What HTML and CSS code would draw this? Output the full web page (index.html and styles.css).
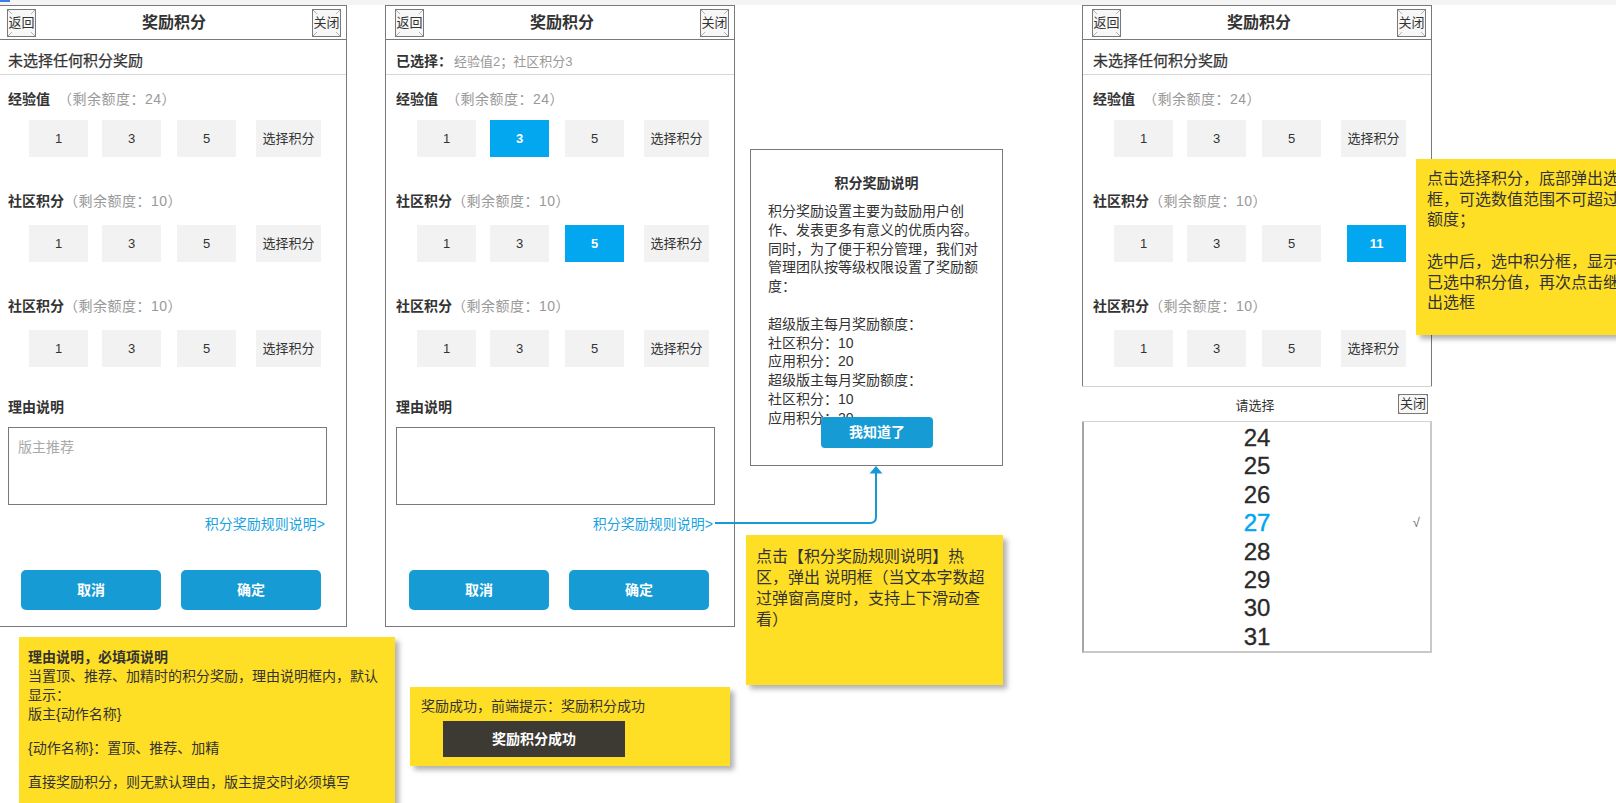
FILE: index.html
```html
<!DOCTYPE html>
<html lang="zh-CN">

<head>
    <meta charset="UTF-8">
    <title>奖励积分</title>
    <link rel="stylesheet" href="styles.css">
</head>

<body>
    <div class="canvas">
        <div class="topbar"><span class="topbar-mark"></span></div>

        <!-- 默认状态 -->
        <section class="phone phone-a">
            <header class="phone-header">
                <span class="ph-btn"><span>返回</span></span>
                <h1 class="phone-title">奖励积分</h1>
                <span class="ph-btn"><span>关闭</span></span>
            </header>
            <div class="status">未选择任何积分奖励</div>
            <div class="phone-body">
                <div class="group">
                    <div class="group-label">经验值<span class="quota quota-wide">（剩余额度：24）</span></div>
                    <div class="options">
                        <span class="opt">1</span><span class="opt">3</span><span class="opt">5</span><span class="opt opt-pick">选择积分</span>
                    </div>
                </div>
                <div class="group">
                    <div class="group-label">社区积分<span class="quota">（剩余额度：10）</span></div>
                    <div class="options">
                        <span class="opt">1</span><span class="opt">3</span><span class="opt">5</span><span class="opt opt-pick">选择积分</span>
                    </div>
                </div>
                <div class="group">
                    <div class="group-label">社区积分<span class="quota">（剩余额度：10）</span></div>
                    <div class="options">
                        <span class="opt">1</span><span class="opt">3</span><span class="opt">5</span><span class="opt opt-pick">选择积分</span>
                    </div>
                </div>
                <div class="reason-label">理由说明</div>
                <div class="reason-box">版主推荐</div>
                <a class="rule-link" href="#">积分奖励规则说明&gt;</a>
                <div class="actions">
                    <span class="btn">取消</span>
                    <span class="btn">确定</span>
                </div>
            </div>
        </section>

        <!-- 已选择状态 -->
        <section class="phone phone-b">
            <header class="phone-header">
                <span class="ph-btn"><span>返回</span></span>
                <h1 class="phone-title">奖励积分</h1>
                <span class="ph-btn"><span>关闭</span></span>
            </header>
            <div class="status status-picked">已选择：<span class="picked">经验值2；社区积分3</span></div>
            <div class="phone-body">
                <div class="group">
                    <div class="group-label">经验值<span class="quota quota-wide">（剩余额度：24）</span></div>
                    <div class="options">
                        <span class="opt">1</span><span class="opt opt-on">3</span><span class="opt">5</span><span class="opt opt-pick">选择积分</span>
                    </div>
                </div>
                <div class="group">
                    <div class="group-label">社区积分<span class="quota">（剩余额度：10）</span></div>
                    <div class="options">
                        <span class="opt">1</span><span class="opt">3</span><span class="opt opt-on">5</span><span class="opt opt-pick">选择积分</span>
                    </div>
                </div>
                <div class="group">
                    <div class="group-label">社区积分<span class="quota">（剩余额度：10）</span></div>
                    <div class="options">
                        <span class="opt">1</span><span class="opt">3</span><span class="opt">5</span><span class="opt opt-pick">选择积分</span>
                    </div>
                </div>
                <div class="reason-label">理由说明</div>
                <div class="reason-box"></div>
                <a class="rule-link" href="#">积分奖励规则说明&gt;</a>
                <div class="actions">
                    <span class="btn">取消</span>
                    <span class="btn">确定</span>
                </div>
            </div>
        </section>

        <!-- 说明弹窗 -->
        <div class="dialog">
            <h2 class="dialog-title">积分奖励说明</h2>
            <div class="dialog-text">
                <p>积分奖励设置主要为鼓励用户创作、发表更多有意义的优质内容。同时，为了便于积分管理，我们对管理团队按等级权限设置了奖励额度：</p>
                <p class="gap">超级版主每月奖励额度：<br>社区积分：10<br>应用积分：20<br>超级版主每月奖励额度：<br>社区积分：10<br>应用积分：20</p>
            </div>
            <span class="dialog-btn">我知道了</span>
        </div>

        <svg class="connector" width="200" height="80" viewBox="0 0 200 80">
            <path d="M15 68 H170 Q176 68 176 62 V17" fill="none" stroke="#1799d3" stroke-width="2"/>
            <polygon points="176,11 169.5,18.5 182.5,18.5" fill="#1799d3"/>
        </svg>

        <!-- 选择积分 + 底部选框 -->
        <div class="device-c">
            <section class="phone phone-c">
                <header class="phone-header">
                    <span class="ph-btn"><span>返回</span></span>
                    <h1 class="phone-title">奖励积分</h1>
                    <span class="ph-btn"><span>关闭</span></span>
                </header>
                <div class="status">未选择任何积分奖励</div>
                <div class="phone-body">
                    <div class="group">
                        <div class="group-label">经验值<span class="quota quota-wide">（剩余额度：24）</span></div>
                        <div class="options">
                            <span class="opt">1</span><span class="opt">3</span><span class="opt">5</span><span class="opt opt-pick">选择积分</span>
                        </div>
                    </div>
                    <div class="group">
                        <div class="group-label">社区积分<span class="quota">（剩余额度：10）</span></div>
                        <div class="options">
                            <span class="opt">1</span><span class="opt">3</span><span class="opt">5</span><span class="opt opt-on">11</span>
                        </div>
                    </div>
                    <div class="group">
                        <div class="group-label">社区积分<span class="quota">（剩余额度：10）</span></div>
                        <div class="options">
                            <span class="opt">1</span><span class="opt">3</span><span class="opt">5</span><span class="opt opt-pick">选择积分</span>
                        </div>
                    </div>
                </div>
            </section>
            <div class="picker-head">
                <span></span>
                <span class="picker-title">请选择</span>
                <span class="ph-btn ph-btn-sm"><span>关闭</span></span>
            </div>
            <div class="picker-list">
                <div class="picker-item"><span></span><span>24</span><span></span></div>
                <div class="picker-item"><span></span><span>25</span><span></span></div>
                <div class="picker-item"><span></span><span>26</span><span></span></div>
                <div class="picker-item is-current"><span></span><span>27</span><span class="picker-check">√</span></div>
                <div class="picker-item"><span></span><span>28</span><span></span></div>
                <div class="picker-item"><span></span><span>29</span><span></span></div>
                <div class="picker-item"><span></span><span>30</span><span></span></div>
                <div class="picker-item"><span></span><span>31</span><span></span></div>
            </div>
        </div>

        <!-- 注释 -->
        <div class="note note-reason">
            <p><b>理由说明，必填项说明</b><br>当置顶、推荐、加精时的积分奖励，理由说明框内，默认显示：<br>版主{动作名称}</p>
            <p class="gap">{动作名称}：置顶、推荐、加精</p>
            <p class="gap">直接奖励积分，则无默认理由，版主提交时必须填写</p>
        </div>

        <div class="note note-toast">
            <p>奖励成功，前端提示：奖励积分成功</p>
            <div class="toast">奖励积分成功</div>
        </div>

        <div class="note note-rule">
            <p>点击【积分奖励规则说明】热区，弹出 说明框（当文本字数超过弹窗高度时，支持上下滑动查看）</p>
        </div>

        <div class="note note-pick">
            <p>点击选择积分，底部弹出选择框，可选数值范围不可超过剩余额度；</p>
            <p class="gap">选中后，选中积分框，显示为：已选中积分值，再次点击继续弹出选框</p>
        </div>
    </div>
</body>

</html>
```

FILE: styles.css
```css
:root {
    --line: #797979;
    --divider: #d7d7d7;
    --text: #333333;
    --muted: #999999;
    --blue: #169bd5;
    --blue-on: #02a7f0;
    --sticky: #ffdf25;
}

* {
    margin: 0;
    padding: 0;
    box-sizing: border-box;
}

html,
body {
    width: 100%;
    height: 100%;
    overflow: hidden;
}

body {
    background-color: #fff;
    color: var(--text);
    font-family: "Liberation Sans", "Noto Sans CJK SC", sans-serif;
    font-size: 14px;
    text-spacing-trim: space-all;
}

a {
    text-decoration: none;
}

.canvas {
    position: relative;
    width: 1616px;
    height: 803px;
    overflow: hidden;
}

.topbar {
    height: 5px;
    background-color: #f4f4f4;
}

.topbar-mark {
    display: block;
    width: 10px;
    height: 2px;
    background-color: #3d7de8;
}

/* phone frames */

.phone {
    position: absolute;
    top: 5px;
    width: 350px;
    border: 1px solid var(--line);
    background-color: #fff;
}

.phone-a {
    left: -3px;
}

.phone-b {
    left: 385px;
}

.device-c {
    position: absolute;
    left: 1082px;
    top: 5px;
    width: 350px;
}

.device-c .phone {
    position: static;
    border-bottom: 0;
}

.phone-header {
    display: grid;
    grid-template-columns: 1fr auto 1fr;
    align-items: center;
    height: 34px;
    padding: 0 5px 0 9px;
    border-bottom: 1px solid var(--line);
}

.phone-title {
    font-size: 16px;
    font-weight: bold;
    line-height: 20px;
}

.ph-btn {
    display: flex;
    align-items: center;
    justify-content: center;
    width: 29px;
    height: 28px;
    border: 1px solid var(--line);
    background-color: #f7f7f7;
    background-image:
        linear-gradient(to bottom right, transparent calc(50% - 0.6px), #a8a8a8 50%, transparent calc(50% + 0.6px)),
        linear-gradient(to top right, transparent calc(50% - 0.6px), #a8a8a8 50%, transparent calc(50% + 0.6px));
    font-size: 13px;
    line-height: 14px;
    color: var(--text);
}

.ph-btn span {
    background-color: #f7f7f7;
    padding: 2px 0;
}

.ph-btn:first-child {
    justify-self: start;
}

.ph-btn:last-child {
    justify-self: end;
}

.ph-btn-sm {
    width: 30px;
    height: 20px;
}

.status {
    height: 35px;
    padding: 11px 0 0 10px;
    border-bottom: 1px solid var(--divider);
    font-size: 15px;
    line-height: 20px;
    -webkit-text-stroke: 0.25px var(--text);
}

.status-picked {
    font-size: 14px;
    font-weight: bold;
    -webkit-text-stroke: 0;
}

.picked {
    margin-left: 2px;
    font-size: 13px;
    font-weight: normal;
    color: var(--muted);
}

.phone-body {
    padding: 0 0 16px 10px;
}

.phone-c .phone-body {
    padding-bottom: 19px;
}

.group {
    margin-top: 34px;
}

.group:first-child {
    margin-top: 14px;
}

.group-label {
    font-weight: bold;
    line-height: 20px;
    margin-bottom: 14px;
}

.group:first-child .group-label {
    margin-bottom: 11px;
}

.quota {
    font-weight: normal;
    color: var(--muted);
    letter-spacing: 0.5px;
}

.quota-wide {
    margin-left: 8px;
}

.options {
    display: flex;
    width: 313px;
    padding-left: 21px;
}

.opt {
    width: 59px;
    height: 37px;
    background-color: #f2f2f2;
    font-size: 13px;
    line-height: 37px;
    text-align: center;
    color: var(--text);
}

.opt:nth-child(2) {
    margin-left: 14px;
}

.opt:nth-child(3) {
    margin-left: 16px;
}

.opt:last-child {
    margin-left: auto;
}

.opt-pick {
    width: 65px;
}

.opt-on {
    background-color: var(--blue-on);
    color: #fff;
    font-weight: bold;
}

.reason-label {
    margin-top: 30px;
    font-weight: bold;
    line-height: 20px;
}

.reason-box {
    width: 319px;
    height: 78px;
    margin-top: 10px;
    padding: 9px 9px;
    border: 1px solid var(--line);
    line-height: 20px;
    color: #aaa;
}

.rule-link {
    display: block;
    width: 319px;
    margin-top: 9px;
    padding-right: 2px;
    text-align: right;
    line-height: 20px;
    color: #19a3e0;
}

.actions {
    display: flex;
    gap: 20px;
    margin-top: 36px;
    padding-left: 13px;
}

.btn {
    width: 140px;
    height: 40px;
    border-radius: 5px;
    background-color: var(--blue);
    color: #fff;
    font-weight: bold;
    line-height: 40px;
    text-align: center;
}

/* rule dialog */

.dialog {
    position: absolute;
    left: 750px;
    top: 149px;
    width: 253px;
    height: 317px;
    padding: 23px 17px 0;
    border: 1px solid var(--line);
    background-color: #fff;
}

.dialog-title {
    font-size: 14px;
    font-weight: bold;
    line-height: 20px;
    text-align: center;
}

.dialog-text {
    margin-top: 9px;
    height: 245px;
    overflow: hidden;
    line-height: 18.8px;
}

.gap {
    margin-top: 18.8px;
}

.dialog-btn {
    position: absolute;
    left: 70px;
    bottom: 17px;
    width: 112px;
    height: 31px;
    border-radius: 4px;
    background-color: var(--blue);
    color: #fff;
    font-weight: bold;
    line-height: 31px;
    text-align: center;
}

.connector {
    position: absolute;
    left: 700px;
    top: 455px;
}

/* bottom picker */

.picker-head {
    display: grid;
    grid-template-columns: 1fr auto 1fr;
    align-items: center;
    height: 36px;
    padding-right: 4px;
    border-top: 1px solid #d2d2d2;
    border-bottom: 1px solid #d2d2d2;
    background-color: #fff;
}

.picker-title {
    font-size: 13px;
}

.picker-list {
    height: 231px;
    padding-top: 2px;
    overflow: hidden;
    border: 2px solid #c9c9c9;
    border-top: 0;
    border-left-color: #a6a6a6;
    background-color: #fff;
}

.picker-item {
    display: grid;
    grid-template-columns: 1fr auto 1fr;
    font-size: 24px;
    line-height: 28.4px;
    color: #2a2a2a;
    -webkit-text-stroke: 0.3px #2a2a2a;
}

.picker-item.is-current {
    color: var(--blue-on);
    -webkit-text-stroke: 0.5px var(--blue-on);
}

.picker-check {
    justify-self: end;
    padding-right: 10px;
    font-size: 13px;
    color: #666;
    -webkit-text-stroke: 0;
}

/* sticky notes */

.note {
    position: absolute;
    background-color: var(--sticky);
    box-shadow: 4px 4px 5px rgba(0, 0, 0, 0.3);
    color: var(--text);
}

.note-reason {
    left: 19px;
    top: 637px;
    width: 376px;
    height: 190px;
    padding: 11px 10px 0 9px;
    line-height: 19px;
}

.note-reason .gap {
    margin-top: 15px;
}

.note-toast {
    left: 410px;
    top: 687px;
    width: 320px;
    height: 79px;
    padding: 10px 0 0 11px;
    line-height: 19px;
}

.toast {
    width: 182px;
    height: 36px;
    margin: 5px 0 0 22px;
    background-color: #3d3a33;
    color: #fff;
    font-weight: bold;
    line-height: 36px;
    text-align: center;
}

.note-rule {
    left: 746px;
    top: 535px;
    width: 257px;
    height: 150px;
    padding: 11px 10px 0;
    font-size: 16px;
    line-height: 21px;
}

.note-pick {
    left: 1416px;
    top: 159px;
    width: 257px;
    height: 176px;
    padding: 10px 10px 0 11px;
    font-size: 16px;
    line-height: 20.7px;
}

.note-pick .gap {
    margin-top: 20.7px;
}
```
